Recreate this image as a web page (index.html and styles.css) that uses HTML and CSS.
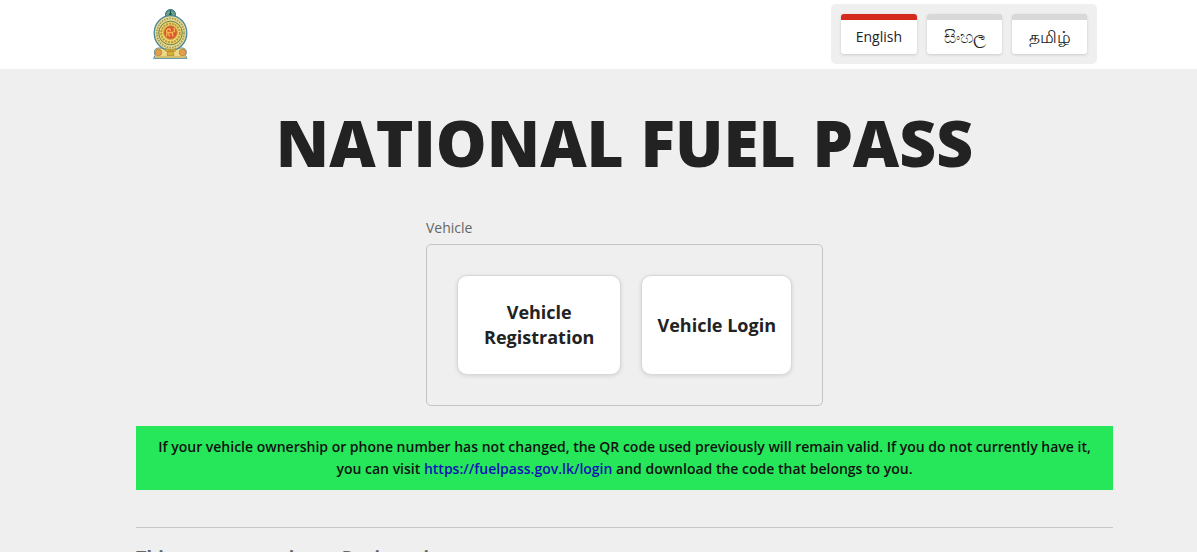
FILE: index.html
```html
<!DOCTYPE html>
<html lang="en">
<head>
    <meta charset="UTF-8">
    <meta name="viewport" content="width=device-width, initial-scale=1.0">
    <title>National Fuel Pass</title>
    <link rel="stylesheet" href="styles.css">
</head>
<body>
    <header class="header">
        <a class="logo" href="#" aria-label="National Fuel Pass home">
            <svg viewBox="0 0 36 50" width="36" height="50">
                <!-- wheel on top -->
                <circle cx="18.5" cy="5.5" r="5" fill="#5b9a8c" stroke="#2f6f80"/>
                <circle cx="18.5" cy="5.5" r="2.6" fill="#3a7d62" stroke="#9ab787"/>
                <path d="M18.5 1.500v8" stroke="#1d5150" stroke-width="1.2"/>
                <!-- base -->
                <path d="M1.500 49.400 L3 46.500 Q0.800 40 6 39 L12 39 L14 36 H23 L25 39 L31 39 Q36 40.500 33.500 46.500 L35 49.400Z" fill="#ecd886" stroke="#5e93a3"/>
                <!-- wreath -->
                <ellipse cx="18.500" cy="24" rx="16.300" ry="17.300" fill="#e3d793" stroke="#4b8797" stroke-width="1.3"/>
                <ellipse cx="18.500" cy="24" rx="13.600" ry="14.600" fill="none" stroke="#a39a50" stroke-width="1.700" stroke-dasharray="1.500 1.200"/>
                <circle cx="18.500" cy="24" r="11.800" fill="#e9d56a" stroke="#6d8148"/>
                <circle cx="18.500" cy="24" r="9.300" fill="none" stroke="#b99442" stroke-width="1.800" stroke-dasharray="2 1"/>
                <circle cx="18.500" cy="23.500" r="6.800" fill="#dd5534" stroke="#c9983a"/>
                <!-- lion -->
                <path d="M14.500 27.500l.5-4h5l1 4M15 24l-.5-2.500 1.500-1.500h2l.5 2M16.500 24.500l1 3M20 23.500l2.500-1v-2.500l-1.500-.5" fill="none" stroke="#f6b84e" stroke-width="1.300"/>
                <!-- sun, moon and vase -->
                <circle cx="6.500" cy="43.500" r="3.200" fill="#e5a04b" stroke="#c58838"/>
                <circle cx="30.500" cy="43.500" r="3.200" fill="#e5a04b" stroke="#c58838"/>
                <path d="M13 39.500q5.500 2.500 11 0l-1 3h-9ZM16 42h5l1 4.500h-7Z" fill="#dcae34" stroke="#a98935" stroke-width=".7"/>
                <path d="M3 48h31" stroke="#c0a957"/>
            </svg>
        </a>
        <nav class="languages" aria-label="Language">
            <button class="lang-btn active" type="button">English</button>
            <button class="lang-btn local" type="button" lang="si">සිංහල</button>
            <button class="lang-btn local" type="button" lang="ta">தமிழ்</button>
        </nav>
    </header>

    <main class="content">
        <h1>NATIONAL FUEL PASS</h1>

        <section class="vehicle" aria-labelledby="vehicleLabel">
            <h2 class="vehicle-label" id="vehicleLabel">Vehicle</h2>
            <div class="vehicle-box">
                <button class="vehicle-btn register-btn" type="button">Vehicle Registration</button>
                <button class="vehicle-btn login-btn" type="button">Vehicle Login</button>
            </div>
        </section>

        <p class="notice">If your vehicle ownership or phone number has not changed, the QR code used previously will remain valid. If you do not currently have it, you can visit <a href="https://fuelpass.gov.lk/login">https://fuelpass.gov.lk/login</a> and download the code that belongs to you.</p>

        <section class="notes">
            <h3>Things to note prior to Registration</h3>
        </section>
    </main>
</body>
</html>
```
FILE: styles.css
```css
* {
    margin: 0;
    padding: 0;
    box-sizing: border-box;
}

body {
    background: #efefef;
    color: #222;
    font-family: 'Open Sans', 'Noto Sans', sans-serif;
    font-size: 14px;
    line-height: 22px;
}

.header {
    display: flex;
    justify-content: space-between;
    align-items: center;
    background: #fff;
    padding: 4px 100px 5px 152px;
}

.logo svg {
    display: block;
}

.languages {
    display: flex;
    gap: 10px;
    padding: 10px;
    background: #efefef;
    border-radius: 5px;
}

.lang-btn {
    min-width: 75px;
    height: 40px;
    padding: 0 15px;
    background: #fff;
    border: none;
    border-top: 6px solid #d8d8d8;
    border-radius: 3px;
    box-shadow: 0 1px 3px rgba(0, 0, 0, 0.15);
    color: #222;
    font: inherit;
    cursor: pointer;
}

.lang-btn.active {
    border-top-color: #d52b1e;
}

.lang-btn.local {
    font-size: 17px;
}

.content {
    padding: 30px 84px 0 136px;
}

h1 {
    font-size: 64px;
    font-weight: 800;
    line-height: 88px;
    text-align: center;
}

.vehicle {
    max-width: 397px;
    margin: 30px auto 20px;
}

.vehicle-label {
    color: #666;
    font-size: 14px;
    font-weight: 400;
    margin-bottom: 5px;
}

.vehicle-box {
    display: flex;
    gap: 20px;
    padding: 30px;
    border: 1px solid #c4c4c4;
    border-radius: 5px;
}

.vehicle-btn {
    min-height: 100px;
    padding: 10px 15px;
    background: #fff;
    border: 1px solid #d8d8d8;
    border-radius: 10px;
    box-shadow: 0 1px 4px rgba(0, 0, 0, 0.12);
    color: #222;
    font-family: inherit;
    font-size: 18px;
    font-weight: 700;
    line-height: 25px;
    cursor: pointer;
}

.register-btn {
    flex: 1;
}

.login-btn {
    white-space: nowrap;
}

.notice {
    padding: 10px 20px;
    background: #26e65a;
    color: #111;
    font-weight: 600;
    text-align: center;
}

.notice a {
    color: #1212b8;
    text-decoration: none;
}

.notes {
    margin-top: 37px;
    padding-top: 17px;
    border-top: 1px solid #c8c8c8;
    color: #666;
}

.notes h3 {
    font-size: 18px;
    line-height: 25px;
}
```
